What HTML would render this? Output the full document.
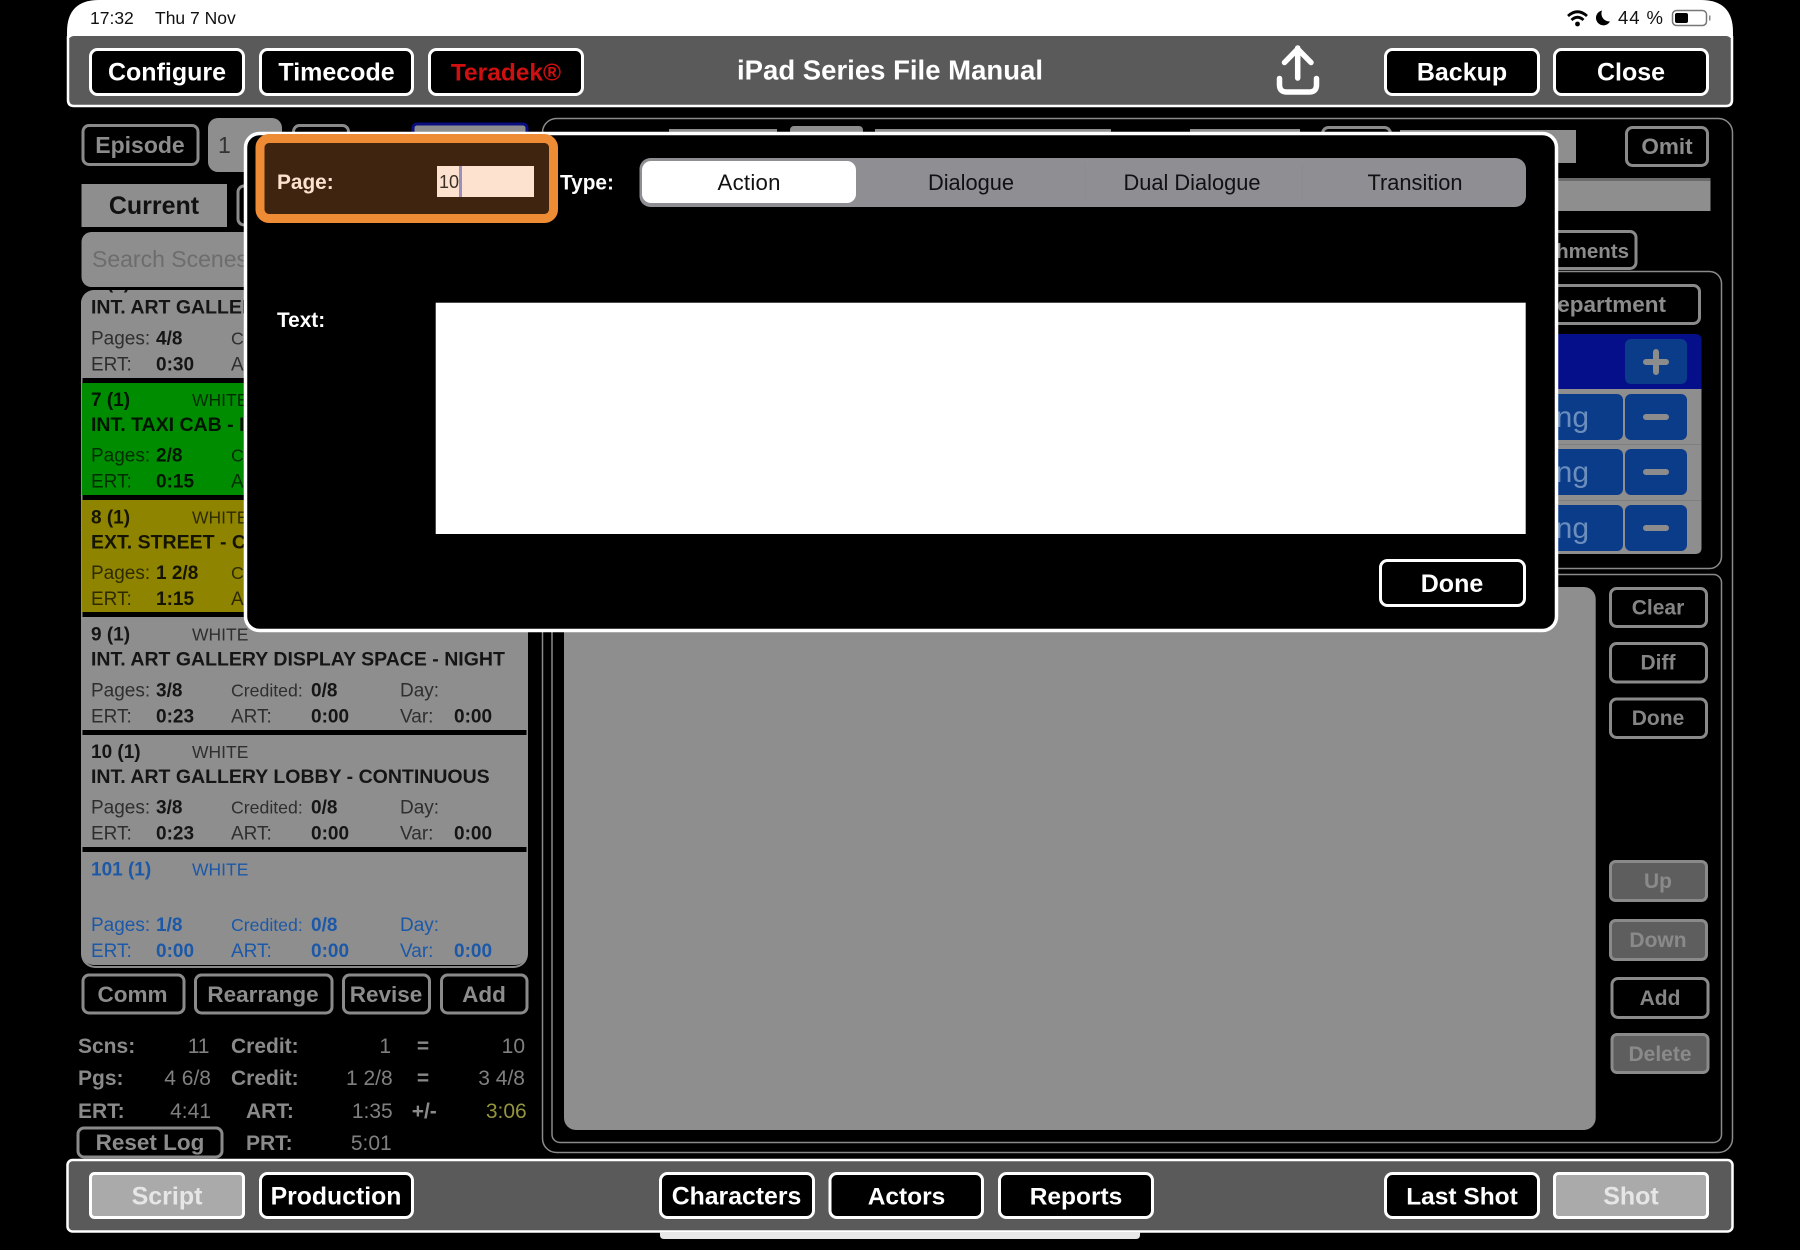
<!DOCTYPE html>
<html lang="en"><head><meta charset="utf-8"><title>iPad Series File Manual</title>
<style>
html,body{margin:0;padding:0;background:#000;width:1800px;height:1250px;overflow:hidden}
svg{display:block;font-family:"Liberation Sans",sans-serif}
.bw{fill:#000;stroke:#fff;stroke-width:3}
.bg{fill:#000;stroke:#8a8a8a;stroke-width:3}
.bd{fill:#5e5e5e;stroke:#8a8a8a;stroke-width:3}
.tw{fill:#fff;font-weight:700;font-size:25px;text-anchor:middle}
.tg{fill:#8c8c8c;font-weight:700;font-size:22.5px;text-anchor:middle}
.td{fill:#858585;font-weight:700;font-size:21px;text-anchor:middle}
.r{font-size:19px;fill:#000;fill-opacity:.68}
.c{font-size:17.7px;fill:#000;fill-opacity:.68}
.b{font-size:19px;font-weight:700;fill:#000;fill-opacity:.85}
.h{font-size:19.5px;font-weight:700;fill:#000;fill-opacity:.85}
.w{font-size:17.5px;fill:#000;fill-opacity:.68}
.blue text{fill:#1c58a8;fill-opacity:1}
.sl{font-size:21px;font-weight:700;fill:#8a8a8a}
.sv{font-size:21px;fill:#808080;text-anchor:end}
.seg{font-size:22.2px;fill:#111;text-anchor:middle}
.ln{fill:none;stroke:#8a8a8a;stroke-width:1.5}
</style></head><body>
<svg width="1800" height="1250" viewBox="0 0 1800 1250" xmlns="http://www.w3.org/2000/svg">
<defs><clipPath id="list"><rect x="81" y="290" width="447" height="678" rx="12"/></clipPath></defs>
<rect width="1800" height="1250" fill="#000"/>

<!-- status bar -->
<path d="M67 38V32Q67 0 99 0H1701Q1733 0 1733 32V38Z" fill="#fff"/>
<text x="90" y="24" font-size="17.5" fill="#111">17:32</text>
<text x="155" y="24" font-size="17.5" fill="#111">Thu 7 Nov</text>
<g fill="none" stroke="#000" stroke-width="2.8" stroke-linecap="butt">
<path d="M1568 16Q1577.5 7.5 1587 16"/><path d="M1571.5 20Q1577.5 14.5 1583.5 20"/></g>
<circle cx="1577.5" cy="24" r="2.4" fill="#000"/>
<path d="M1602 10.5A7.5 7.5 0 1 0 1610 21.5A8 8 0 0 1 1602 10.5Z" fill="#000"/>
<text x="1618" y="24" font-size="18.5" fill="#111" textLength="45">44 %</text>
<rect x="1672.5" y="10.5" width="34" height="15" rx="4" fill="none" stroke="#777" stroke-width="1.5"/>
<rect x="1675" y="13" width="13" height="10" rx="2" fill="#000"/>
<rect x="1709" y="15.5" width="1.5" height="5" fill="#888"/>

<!-- top bar -->
<rect x="68" y="36" width="1664" height="70" rx="6" fill="#5a5a5a"/>
<path d="M68 36V100Q68 106 74 106H1726Q1732 106 1732 100V36" fill="none" stroke="#fff" stroke-width="2.5"/>
<rect class="bw" x="90.5" y="49.5" width="153" height="45" rx="7"/>
<rect class="bw" x="260.5" y="49.5" width="152" height="45" rx="7"/>
<rect class="bw" x="429.5" y="49.5" width="153" height="45" rx="7"/>
<rect class="bw" x="1385.5" y="49.5" width="153" height="45" rx="7"/>
<rect class="bw" x="1554.5" y="49.5" width="153" height="45" rx="7"/>
<text class="tw" x="167" y="80.5">Configure</text>
<text class="tw" x="336.5" y="80.5">Timecode</text>
<text class="tw" x="506" y="80.5" style="fill:#d01010;font-size:24.5px">Teradek®</text>
<text class="tw" x="1462" y="80.5">Backup</text>
<text class="tw" x="1631" y="80.5">Close</text>
<text x="737" y="79.5" font-size="27.5" font-weight="700" fill="#fff" textLength="306">iPad Series File Manual</text>
<path d="M1297.7 48V78M1284.5 62.5L1297.7 49L1311 62.5" fill="none" stroke="#fff" stroke-width="5.5" stroke-linecap="round" stroke-linejoin="round"/>
<path d="M1279.5 78.5V85Q1279.5 92 1287 92H1309Q1316.5 92 1316.5 85V78.5" fill="none" stroke="#fff" stroke-width="5.5" stroke-linecap="round"/>

<!-- left header -->
<rect class="bg" x="83" y="125.5" width="115" height="39" rx="6"/>
<text class="tg" x="140" y="153" style="font-size:23px">Episode</text>
<rect x="208" y="118" width="74" height="54" rx="10" fill="#8e8e8e"/>
<text x="218" y="153" font-size="23" fill="#333">1</text>
<rect class="bg" x="293.5" y="125.5" width="55" height="39" rx="6"/>
<rect x="413" y="124" width="114" height="40" rx="4" fill="#8e8e8e" stroke="#0a0f80" stroke-width="3"/>
<rect x="81.5" y="184" width="145.5" height="43" fill="#8e8e8e"/>
<text x="154" y="214" font-size="25" font-weight="700" fill="#111" text-anchor="middle">Current</text>
<rect class="bg" x="238" y="186" width="60" height="39" rx="6"/>
<rect x="81.5" y="232" width="300" height="55" rx="10" fill="#8e8e8e"/>
<text x="92" y="267" font-size="23" fill="#6d6d6d">Search Scenes</text>

<!-- scene list -->
<rect x="81" y="290" width="447" height="678" rx="14" fill="#8a8a8a"/>
<rect x="82.5" y="290" width="444" height="676" rx="13" fill="#000"/>
<rect x="81" y="290" width="447" height="675" rx="13" fill="#8e8e8e"/>
<g clip-path="url(#list)">
<rect x="82.5" y="378" width="444" height="5" fill="#000"/>
<rect x="82" y="383" width="445" height="112" fill="#008c00"/>
<rect x="82.5" y="495" width="444" height="5" fill="#000"/>
<rect x="82" y="500" width="445" height="112" fill="#8e8400"/>
<rect x="82.5" y="612" width="444" height="5" fill="#000"/>
<rect x="82.5" y="730" width="444" height="5" fill="#000"/>
<rect x="82.5" y="847" width="444" height="5" fill="#000"/>

<g transform="translate(0,265.7)">
<text class="b" x="91" y="23">6 (1)</text><text class="w" x="192" y="23">WHITE</text>
<text class="h" x="91" y="48">INT. ART GALLERY DISPLAY SPACE - NIGHT</text>
<text class="r" x="91" y="78.7">Pages:</text><text class="b" x="156" y="78.7">4/8</text><text class="c" x="231" y="78.7">Credited:</text>
<text class="r" x="91" y="104.7">ERT:</text><text class="b" x="156" y="104.7">0:30</text><text class="r" x="231" y="104.7">ART:</text>
</g>
<g transform="translate(0,383)">
<text class="b" x="91" y="23">7 (1)</text><text class="w" x="192" y="23">WHITE</text>
<text class="h" x="91" y="48">INT. TAXI CAB - INT</text>
<text class="r" x="91" y="78.7">Pages:</text><text class="b" x="156" y="78.7">2/8</text><text class="c" x="231" y="78.7">Credited:</text>
<text class="r" x="91" y="104.7">ERT:</text><text class="b" x="156" y="104.7">0:15</text><text class="r" x="231" y="104.7">ART:</text>
</g>
<g transform="translate(0,500.3)">
<text class="b" x="91" y="23">8 (1)</text><text class="w" x="192" y="23">WHITE</text>
<text class="h" x="91" y="48">EXT. STREET - CONTINUOUS</text>
<text class="r" x="91" y="78.7">Pages:</text><text class="b" x="156" y="78.7">1 2/8</text><text class="c" x="231" y="78.7">Credited:</text>
<text class="r" x="91" y="104.7">ERT:</text><text class="b" x="156" y="104.7">1:15</text><text class="r" x="231" y="104.7">ART:</text>
</g>
<g transform="translate(0,617.6)">
<text class="b" x="91" y="23">9 (1)</text><text class="w" x="192" y="23">WHITE</text>
<text class="h" x="91" y="48">INT. ART GALLERY DISPLAY SPACE - NIGHT</text>
<text class="r" x="91" y="78.7">Pages:</text><text class="b" x="156" y="78.7">3/8</text><text class="c" x="231" y="78.7">Credited:</text><text class="b" x="311" y="78.7">0/8</text><text class="r" x="400" y="78.7">Day:</text>
<text class="r" x="91" y="104.7">ERT:</text><text class="b" x="156" y="104.7">0:23</text><text class="r" x="231" y="104.7">ART:</text><text class="b" x="311" y="104.7">0:00</text><text class="r" x="400" y="104.7">Var:</text><text class="b" x="454" y="104.7">0:00</text>
</g>
<g transform="translate(0,735)">
<text class="b" x="91" y="23">10 (1)</text><text class="w" x="192" y="23">WHITE</text>
<text class="h" x="91" y="48">INT. ART GALLERY LOBBY - CONTINUOUS</text>
<text class="r" x="91" y="78.7">Pages:</text><text class="b" x="156" y="78.7">3/8</text><text class="c" x="231" y="78.7">Credited:</text><text class="b" x="311" y="78.7">0/8</text><text class="r" x="400" y="78.7">Day:</text>
<text class="r" x="91" y="104.7">ERT:</text><text class="b" x="156" y="104.7">0:23</text><text class="r" x="231" y="104.7">ART:</text><text class="b" x="311" y="104.7">0:00</text><text class="r" x="400" y="104.7">Var:</text><text class="b" x="454" y="104.7">0:00</text>
</g>
<g class="blue" transform="translate(0,852.3)">
<text class="b" x="91" y="23">101 (1)</text><text class="w" x="192" y="23">WHITE</text>
<text class="r" x="91" y="78.7">Pages:</text><text class="b" x="156" y="78.7">1/8</text><text class="c" x="231" y="78.7">Credited:</text><text class="b" x="311" y="78.7">0/8</text><text class="r" x="400" y="78.7">Day:</text>
<text class="r" x="91" y="104.7">ERT:</text><text class="b" x="156" y="104.7">0:00</text><text class="r" x="231" y="104.7">ART:</text><text class="b" x="311" y="104.7">0:00</text><text class="r" x="400" y="104.7">Var:</text><text class="b" x="454" y="104.7">0:00</text>
</g>
</g>

<!-- list buttons -->
<rect class="bg" x="83" y="975" width="101" height="38" rx="6"/>
<rect class="bg" x="195.5" y="975" width="136.5" height="38" rx="6"/>
<rect class="bg" x="343.5" y="975" width="86" height="38" rx="6"/>
<rect class="bg" x="441.5" y="975" width="85.5" height="38" rx="6"/>
<text class="tg" x="132.5" y="1002">Comm</text>
<text class="tg" x="263" y="1002">Rearrange</text>
<text class="tg" x="386" y="1002">Revise</text>
<text class="tg" x="484" y="1002">Add</text>

<!-- stats -->
<text class="sl" x="78" y="1053">Scns:</text><text class="sv" x="209.5" y="1053">11</text>
<text class="sl" x="231" y="1053">Credit:</text><text class="sv" x="391" y="1053">1</text>
<text class="sl" x="423" y="1053" style="text-anchor:middle">=</text><text class="sv" x="525" y="1053">10</text>
<text class="sl" x="78" y="1085">Pgs:</text><text class="sv" x="211" y="1085">4 6/8</text>
<text class="sl" x="231" y="1085">Credit:</text><text class="sv" x="392.7" y="1085">1 2/8</text>
<text class="sl" x="423" y="1085" style="text-anchor:middle">=</text><text class="sv" x="525" y="1085">3 4/8</text>
<text class="sl" x="78" y="1118">ERT:</text><text class="sv" x="211" y="1118">4:41</text>
<text class="sl" x="246" y="1118">ART:</text><text class="sv" x="392.7" y="1118">1:35</text>
<text class="sl" x="411.7" y="1118">+/-</text><text class="sv" x="526.7" y="1118" style="fill:#94943e">3:06</text>
<rect class="bg" x="78" y="1128" width="144" height="29" rx="6"/>
<text class="tg" x="150" y="1150">Reset Log</text>
<text class="sl" x="246" y="1150">PRT:</text><text class="sv" x="391.7" y="1150">5:01</text>

<!-- right panels -->
<rect class="ln" x="542.5" y="118.5" width="1190" height="1034" rx="14"/>
<rect x="669" y="129" width="108" height="40" fill="#8e8e8e"/>
<rect x="790" y="126" width="73" height="40" rx="4" fill="#8e8e8e"/>
<rect x="875" y="129" width="236" height="40" fill="#8e8e8e"/>
<rect x="1190" y="129" width="110" height="40" fill="#8e8e8e"/>
<rect class="bg" x="1322.5" y="127.5" width="68" height="38" rx="6"/>
<rect x="1400" y="130" width="176" height="33" fill="#8e8e8e"/>
<rect class="bg" x="1626.5" y="127.5" width="81" height="38" rx="6"/>
<text class="tg" x="1667" y="154">Omit</text>
<rect x="1300" y="178" width="410.5" height="33" fill="#8e8e8e"/>
<rect x="1300" y="178" width="410.5" height="3" fill="#6a6a6a"/>
<rect class="bg" x="1480" y="231.5" width="156" height="37" rx="6"/>
<text class="tg" x="1629" y="258" style="text-anchor:end;font-size:20.5px">Attachments</text>
<rect class="ln" x="552" y="271.5" width="1169.5" height="297" rx="12"/>
<rect class="bg" x="1400" y="285.5" width="299.5" height="38" rx="6"/>
<text class="tg" x="1666" y="312" style="text-anchor:end">Department</text>
<path d="M1400 389V334H1695Q1701.5 334 1701.5 340V389Z" fill="#050f8a"/>
<rect x="1625" y="339" width="62" height="45" rx="6" fill="#0a3c8a"/>
<path d="M1656 352V372M1646 362H1666" stroke="#8c8c8c" stroke-width="6" stroke-linecap="round"/>
<path d="M1400 389H1701.5V548Q1701.5 554 1695 554H1400Z" fill="#8e8e8e"/>
<rect x="1400" y="444" width="301.5" height="1" fill="#7f7f7f"/>
<rect x="1400" y="500" width="301.5" height="1" fill="#7f7f7f"/>
<rect x="1400" y="394" width="223" height="46" rx="6" fill="#0a3c8a"/>
<rect x="1400" y="449" width="223" height="46" rx="6" fill="#0a3c8a"/>
<rect x="1400" y="505" width="223" height="46" rx="6" fill="#0a3c8a"/>
<rect x="1625" y="394" width="62" height="46" rx="6" fill="#0a3c8a"/>
<rect x="1625" y="449" width="62" height="46" rx="6" fill="#0a3c8a"/>
<rect x="1625" y="505" width="62" height="46" rx="6" fill="#0a3c8a"/>
<path d="M1646 417H1666M1646 472H1666M1646 528H1666" stroke="#8c8c8c" stroke-width="6" stroke-linecap="round"/>
<text x="1589" y="427" font-size="30" fill="#6c8ebc" text-anchor="end">Nothing</text>
<text x="1589" y="482" font-size="30" fill="#6c8ebc" text-anchor="end">Nothing</text>
<text x="1589" y="538" font-size="30" fill="#6c8ebc" text-anchor="end">Nothing</text>

<rect class="ln" x="552" y="574.5" width="1169.5" height="568" rx="8"/>
<rect x="564" y="587" width="1031.7" height="543" rx="12" fill="#8e8e8e"/>
<rect class="bg" x="1610.5" y="588.5" width="96" height="38" rx="6"/>
<rect class="bg" x="1610.5" y="643.5" width="96" height="38.5" rx="6"/>
<rect class="bg" x="1610.5" y="699" width="96" height="38.5" rx="6"/>
<text class="td" x="1658" y="614.5">Clear</text>
<text class="td" x="1658" y="669.5">Diff</text>
<text class="td" x="1658" y="725">Done</text>
<rect class="bd" x="1610.5" y="861.5" width="96" height="39" rx="5"/>
<rect class="bd" x="1610.5" y="920.5" width="96" height="39" rx="5"/>
<rect class="bg" x="1612" y="978.5" width="96" height="39" rx="6"/>
<rect class="bd" x="1612" y="1034.5" width="96" height="38" rx="5"/>
<text class="td" x="1658" y="888" style="fill:#8a8a8a">Up</text>
<text class="td" x="1658" y="947" style="fill:#8a8a8a">Down</text>
<text class="td" x="1660" y="1005">Add</text>
<text class="td" x="1660" y="1061" style="fill:#8a8a8a">Delete</text>

<!-- bottom bar -->
<rect x="67.5" y="1160" width="1665" height="71.5" rx="5" fill="#5a5a5a" stroke="#fff" stroke-width="2.5"/>
<rect x="90.5" y="1173.5" width="153" height="44" rx="4" fill="#aaa" stroke="#fff" stroke-width="3"/>
<rect class="bw" x="260.5" y="1173.5" width="152" height="44" rx="7"/>
<rect class="bw" x="660.5" y="1173.5" width="153" height="44" rx="7"/>
<rect class="bw" x="830" y="1173.5" width="152.5" height="44" rx="7"/>
<rect class="bw" x="999.5" y="1173.5" width="153" height="44" rx="7"/>
<rect class="bw" x="1385.5" y="1173.5" width="153" height="44" rx="7"/>
<rect x="1554.5" y="1173.5" width="153" height="44" rx="4" fill="#aaa" stroke="#fff" stroke-width="3"/>
<text class="tw" x="167" y="1204.5" style="fill:#e6e6e6">Script</text>
<text class="tw" x="336" y="1204.5" style="font-size:24.8px">Production</text>
<text class="tw" x="736.5" y="1204.5" style="font-size:24.8px">Characters</text>
<text class="tw" x="906.5" y="1204.5" style="font-size:24.5px">Actors</text>
<text class="tw" x="1076" y="1204.5" style="font-size:24.5px">Reports</text>
<text class="tw" x="1462" y="1204.5" style="font-size:24.5px">Last Shot</text>
<text class="tw" x="1631" y="1204.5" style="fill:#e6e6e6">Shot</text>
<path d="M660 1232H1140V1235Q1140 1239 1136 1239H664Q660 1239 660 1235Z" fill="#e8e8e8"/>

<!-- dialog -->
<rect x="245.5" y="133.5" width="1311" height="497" rx="14" fill="#000" stroke="#fff" stroke-width="3.5"/>
<rect x="260" y="138.5" width="293.5" height="80" rx="9" fill="#3f2510" stroke="#ee8c35" stroke-width="9"/>
<text x="277" y="189" font-size="20.8" font-weight="700" fill="#fde3cf">Page:</text>
<rect x="437" y="166" width="97" height="31" fill="#fde3cf"/>
<text x="439" y="188" font-size="18" fill="#3a3028">10</text>
<rect x="459" y="166" width="3" height="31" fill="#9a90bd"/>
<text x="560" y="189.5" font-size="20.8" font-weight="700" fill="#fff">Type:</text>
<rect x="639.5" y="158" width="886.5" height="49" rx="11" fill="#8e8e93"/>
<rect x="642" y="161" width="214" height="42" rx="9" fill="#fff"/>
<rect x="1084.5" y="164" width="1" height="37" fill="#8a8a8f"/>
<rect x="1301.5" y="164" width="1" height="37" fill="#8a8a8f"/>
<text class="seg" x="749" y="190" textLength="63">Action</text>
<text class="seg" x="971" y="190" style="font-size:21.8px">Dialogue</text>
<text class="seg" x="1192" y="190" style="font-size:21.8px">Dual Dialogue</text>
<text class="seg" x="1415" y="190" style="font-size:21.8px">Transition</text>
<text x="277" y="327" font-size="20.8" font-weight="700" fill="#fff">Text:</text>
<rect x="435.7" y="302.7" width="1090" height="231.3" fill="#fff"/>
<rect class="bw" x="1380.5" y="560.5" width="144" height="45" rx="7"/>
<text class="tw" x="1452" y="592">Done</text>
</svg>
</body></html>
